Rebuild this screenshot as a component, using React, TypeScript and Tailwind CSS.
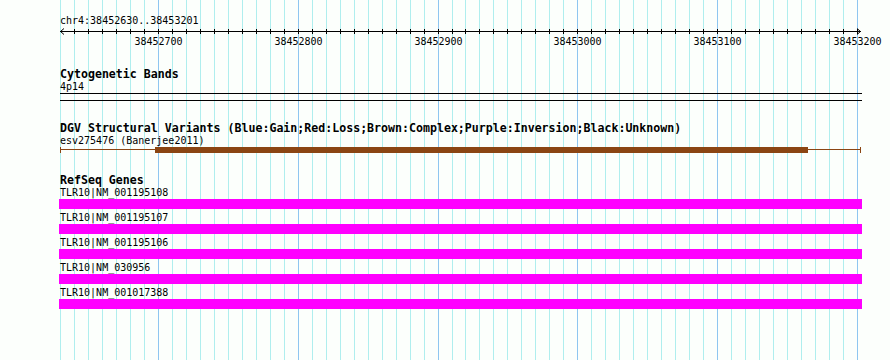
import React from "react";

const START = 38452630;
const PX_PER_BP = 797 / 570;
const xOf = (bp: number) => Math.round(60 + (bp - START) * PX_PER_BP);

const gridBps: number[] = [];
for (let bp = START; bp <= 38453200; bp += 10) gridBps.push(bp);
const majors = gridBps.filter((b) => b % 100 === 0);

const mono = { fontFamily: "'DejaVu Sans Mono', 'Liberation Mono', monospace" };

function Grid() {
  return (
    <svg className="absolute inset-0" width={890} height={360}>
      {gridBps.map((bp) => {
        const x = xOf(bp) + 0.5;
        const major = bp % 100 === 0;
        return (
          <line
            key={bp}
            x1={x}
            x2={x}
            y1={0}
            y2={360}
            stroke={major ? "#8ec6f0" : "#afeeee"}
            strokeWidth={1}
          />
        );
      })}
    </svg>
  );
}

function Ruler() {
  return (
    <svg width={890} height={21} className="block">
      <line x1={60} x2={861} y1={4.5} y2={4.5} stroke="#000" strokeWidth={1} />
      <polyline points="64,1.5 60.5,4.5 64,7.5" fill="none" stroke="#000" strokeWidth={1} />
      <polyline points="857,1.5 860.5,4.5 857,7.5" fill="none" stroke="#000" strokeWidth={1} />
      {gridBps.slice(1).map((bp) => {
        const x = xOf(bp) + 0.5;
        return <line key={bp} x1={x} x2={x} y1={2} y2={7} stroke="#000" strokeWidth={1} />;
      })}
      {majors.map((bp) => (
        <text
          key={bp}
          x={xOf(bp) + 0.5}
          y={18}
          textAnchor="middle"
          fontSize={10}
          fill="#000"
          style={mono}
        >
          {bp}
        </text>
      ))}
    </svg>
  );
}

function DgvGlyph() {
  return (
    <svg width={890} height={6} className="block">
      <rect x={60} y={0} width={1} height={6} fill="#8b4513" />
      <rect x={60} y={2} width={801} height={1} fill="#8b4513" />
      <rect x={155} y={0} width={653} height={6} fill="#8b4513" />
      <rect x={860} y={0} width={1} height={6} fill="#8b4513" />
    </svg>
  );
}

const genes = [
  "TLR10|NM_001195108",
  "TLR10|NM_001195107",
  "TLR10|NM_001195106",
  "TLR10|NM_030956",
  "TLR10|NM_001017388",
];

function Label({ children }: { children: React.ReactNode }) {
  return (
    <div className="relative ml-[60px] h-[12px] text-[10px] leading-[11px] text-black whitespace-nowrap" style={mono}>
      {children}
    </div>
  );
}

function Title({ children }: { children: React.ReactNode }) {
  return (
    <div className="ml-[60px] h-[13px] text-[11.6px] leading-[13px] font-bold text-black whitespace-nowrap" style={mono}>
      {children}
    </div>
  );
}

export default function App() {
  return (
    <div className="relative w-[890px] h-[360px] overflow-hidden bg-[#fcfffc]">
      <Grid />
      <div className="relative flex flex-col pt-[15px]">
        <Label>chr4:38452630..38453201</Label>
        <Ruler />

        <div className="mt-[20px]">
          <Title>Cytogenetic Bands</Title>
          <Label>4p14</Label>
          <div className="ml-[60px] w-[802px] h-px bg-black" />
          <div className="ml-[60px] mt-[6px] w-[802px] h-px bg-black" />
        </div>

        <div className="mt-[21px]">
          <Title>DGV Structural Variants (Blue:Gain;Red:Loss;Brown:Complex;Purple:Inversion;Black:Unknown)</Title>
          <Label>esv275476 (Banerjee2011)</Label>
          <DgvGlyph />
        </div>

        <div className="mt-[21px] flex flex-col">
          <Title>RefSeq Genes</Title>
          {genes.map((g) => (
            <div key={g} className="flex flex-col pb-[3px]">
              <Label>{g}</Label>
              <div className="ml-[59px] w-[803px] h-[10px] bg-[#ff00ff]" />
            </div>
          ))}
        </div>
      </div>
    </div>
  );
}
